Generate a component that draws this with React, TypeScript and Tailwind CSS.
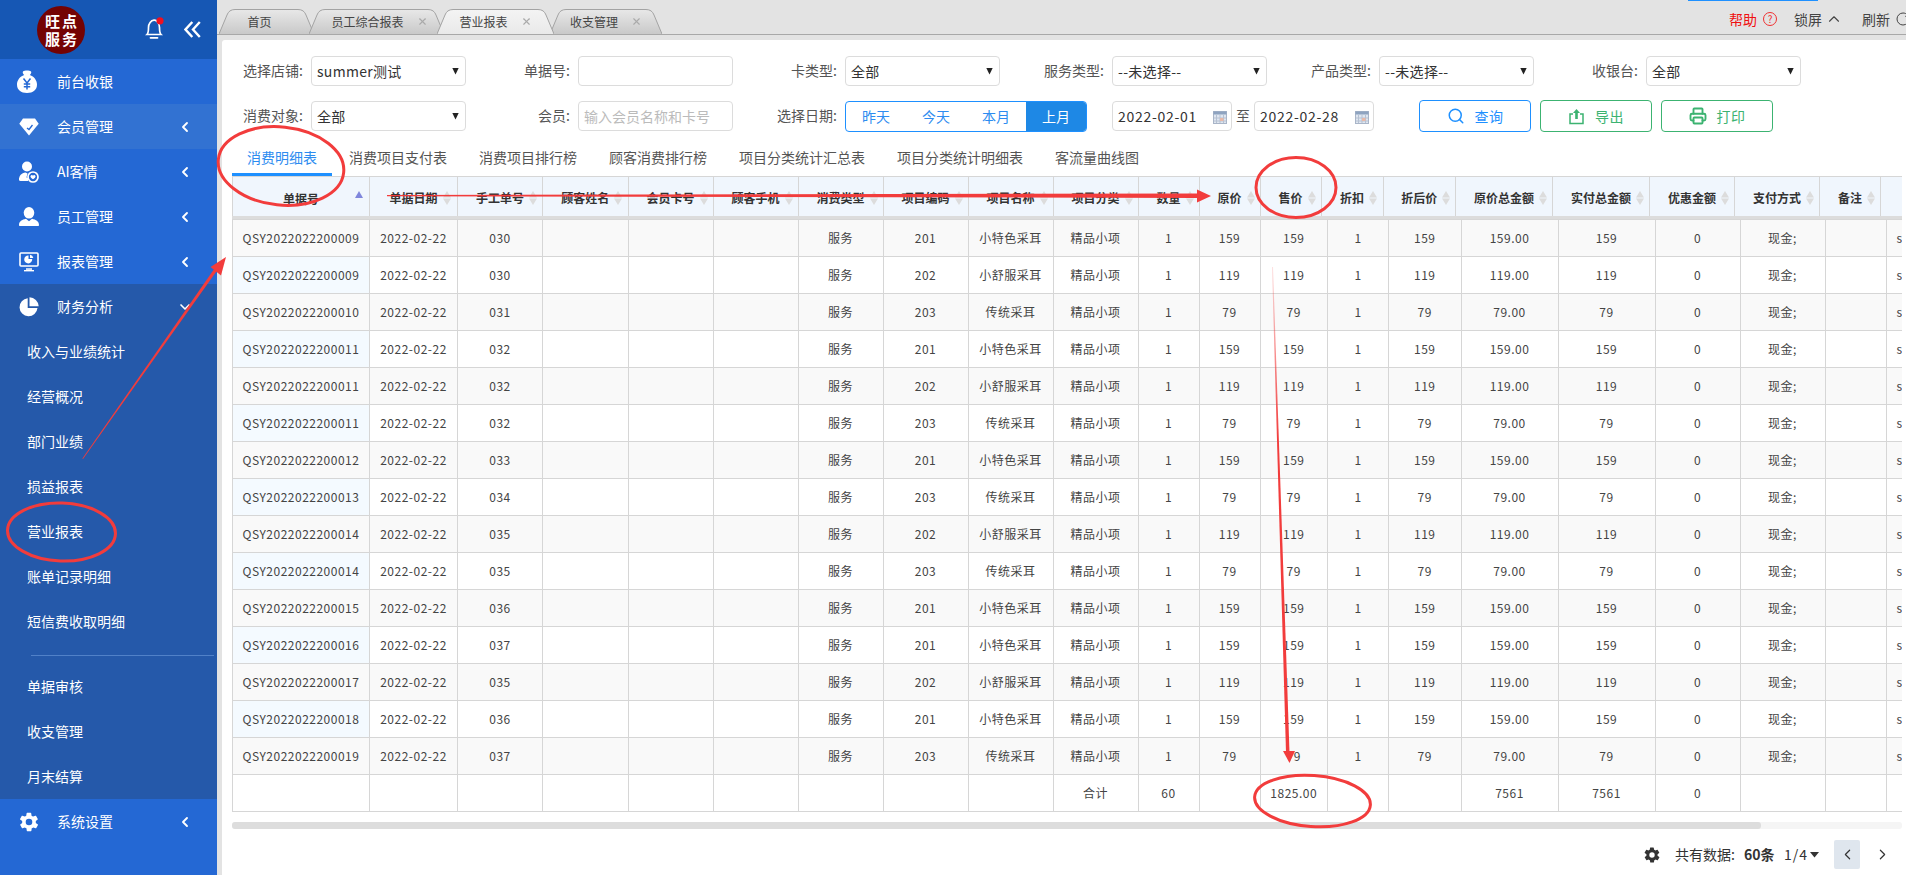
import React from "react";
import { ChevronLeft, ChevronDown, ChevronUp, ChevronRight, Search, Printer, RotateCw, X } from "lucide-react";

const GEAR =
  "M19.4 13a7.6 7.6 0 0 0 0-2l2.1-1.6a.5.5 0 0 0 .1-.6l-2-3.5a.5.5 0 0 0-.6-.2l-2.5 1a7.5 7.5 0 0 0-1.7-1l-.4-2.6a.5.5 0 0 0-.5-.5h-4a.5.5 0 0 0-.5.4l-.4 2.7a7.5 7.5 0 0 0-1.7 1l-2.5-1a.5.5 0 0 0-.6.2l-2 3.5a.5.5 0 0 0 .1.6L4.6 11a7.6 7.6 0 0 0 0 2l-2.1 1.6a.5.5 0 0 0-.1.6l2 3.5a.5.5 0 0 0 .6.2l2.5-1a7.5 7.5 0 0 0 1.7 1l.4 2.6a.5.5 0 0 0 .5.5h4a.5.5 0 0 0 .5-.4l.4-2.7a7.5 7.5 0 0 0 1.7-1l2.5 1a.5.5 0 0 0 .6-.2l2-3.5a.5.5 0 0 0-.1-.6zM12 15.6a3.6 3.6 0 1 1 0-7.2 3.6 3.6 0 0 1 0 7.2z";

function BagIcon() {
  return (
    <svg width="22" height="24" viewBox="0 0 22 24">
      <path d="M7 1.5c1.5-1.2 6.500-1.200 8 0 .8.700-.2 2.800-1.200 3.500 4.400 1.500 7.200 5.500 7.200 9.500 0 5.500-4 8.500-10 8.500S1 20 1 14.500c0-4 2.800-8 7.200-9.500C7.200 4.300 6.200 2.200 7 1.500z" fill="#fff" />
      <path d="M7.500 8.500 11 13l3.500-4.500M11 13v6.500M7.800 14h6.400M7.800 16.800h6.400" stroke="#2468d4" strokeWidth="1.500" fill="none" />
    </svg>
  );
}
function DiamondIcon() {
  return (
    <svg width="20" height="18" viewBox="0 0 20 18">
      <path d="M4 .5h12l3.700 5.300L10 17.500.3 5.800z" fill="#fff" />
      <path d="m8 10 2 1.500 3.500-4.500" stroke="#2468d4" strokeWidth="1.300" fill="none" />
    </svg>
  );
}
function UserBadgeIcon() {
  return (
    <svg width="20" height="22" viewBox="0 0 20 22">
      <circle cx="8" cy="5.500" r="5" fill="#fff" />
      <path d="M0 19c0-4.500 2.500-7 6.500-7.500l2 1A7 7 0 0 0 8.500 19z" fill="#fff" />
      <path d="M0 17h9v3H1.500A1.500 1.500 0 0 1 0 18.500z" fill="#fff" />
      <circle cx="14" cy="16" r="5" fill="#2468d4" stroke="#fff" strokeWidth="1.700" />
      <path d="M11.500 15c.8-1.300 2-1 2.500-.2.500-.8 1.700-1.100 2.500.2.400 1-1 2.400-2.500 3.300-1.500-.9-2.900-2.300-2.500-3.300z" fill="#fff" />
    </svg>
  );
}
function UserIcon() {
  return (
    <svg width="20" height="19" viewBox="0 0 20 19">
      <ellipse cx="10" cy="5.800" rx="5.300" ry="5.800" fill="#fff" />
      <path d="M0 18c0-3.800 3-5.300 7-6.300l3 2.500 3-2.500c4 1 7 2.500 7 6.300 0 .6-.4 1-1 1H1c-.6 0-1-.4-1-1z" fill="#fff" />
    </svg>
  );
}
function MonitorIcon() {
  return (
    <svg width="20" height="20" viewBox="0 0 20 20">
      <rect x="1" y="1" width="18" height="13" rx="1" fill="none" stroke="#fff" strokeWidth="1.600" />
      <rect x="7" y="16.300" width="6" height="1.500" fill="#fff" />
      <rect x="5" y="18" width="10" height="1.400" fill="#fff" />
      <path d="M9.500 3.500v3.600h3.700a4 4 0 1 1-3.700-3.600z" fill="#fff" />
      <path d="M11 2.700a4 4 0 0 1 3.300 3.400H11z" fill="#fff" />
    </svg>
  );
}
function PieIcon() {
  return (
    <svg width="20" height="20" viewBox="0 0 20 20">
      <path d="M8.700 1.200V11h9.800A9 9 0 1 1 8.700 1.200z" fill="#fff" />
      <path d="M10.500.3a9.500 9.500 0 0 1 9.200 8.900h-9.200z" fill="#fff" />
    </svg>
  );
}
function GearIcon({ size = 20, color = "#fff" }: { size?: number; color?: string }) {
  return (
    <svg width={size} height={size} viewBox="0 0 24 24">
      <path d={GEAR} fill={color} fillRule="evenodd" />
    </svg>
  );
}

function Bell() {
  return (
    <svg width="20" height="24" viewBox="0 0 20 24" fill="none">
      <path d="M2 17.500c1.500-1.500 1.500-4 1.500-7C3.500 6.500 6 3.500 9 3.200c3-.3 5.500 3.300 5.500 7.300 0 3 0 5.500 1.500 7z" stroke="#fff" strokeWidth="1.700" />
      <path d="M5.500 20.800h7" stroke="#fff" strokeWidth="1.800" strokeLinecap="round" />
      <circle cx="15" cy="3.800" r="3.600" fill="#f01020" />
    </svg>
  );
}

function DoubleLeft() {
  return (
    <svg width="17" height="17" viewBox="0 0 17 17" fill="none" stroke="#fff" strokeWidth="2.400">
      <path d="M8.300 1 1.500 8.500l6.800 7.500M15.800 1 9 8.500l6.800 7.500" />
    </svg>
  );
}

function MenuRow({ icon, label, active, open }: { icon: React.ReactNode; label: string; active?: boolean; open?: boolean }) {
  return (
    <div className={`flex items-center text-white text-[14px] h-[45px] ${active ? "bg-[#3272d2]" : ""}`}>
      <div className="w-[54px] pl-[3px] flex justify-center">{icon}</div>
      <span className="w-[123px] pl-[3px]">{label}</span>
      {open ? <ChevronDown size={16} strokeWidth={2.500} /> : <ChevronLeft size={16} strokeWidth={2.800} />}
    </div>
  );
}

function Sidebar() {
  const sub1 = ["收入与业绩统计", "经营概况", "部门业绩", "损益报表", "营业报表", "账单记录明细", "短信费收取明细"];
  const sub2 = ["单据审核", "收支管理", "月末结算"];
  return (
    <div className="w-[217px] shrink-0 bg-[#2468d4] flex flex-col">
      <div className="h-[59px] bg-[#1657b4] flex items-center">
        <div className="ml-[37px] w-[48px] h-[48px] rounded-full bg-[#740303] text-white font-bold text-[15px] leading-[18px] flex flex-col items-center justify-center tracking-[2px]">
          <span className="pl-[2px]">旺点</span>
          <span className="pl-[2px]">服务</span>
        </div>
        <div className="ml-[60px] mt-[-1px]"><Bell /></div>
        <div className="ml-[19px]"><DoubleLeft /></div>
      </div>
      <div className="h-[45px] flex items-center text-white text-[14px]">
        <div className="w-[54px] flex justify-center"><BagIcon /></div>
        <span className="pl-[3px]">前台收银</span>
      </div>
      <MenuRow icon={<DiamondIcon />} label="会员管理" active />
      <MenuRow icon={<UserBadgeIcon />} label="AI客情" />
      <MenuRow icon={<UserIcon />} label="员工管理" />
      <MenuRow icon={<MonitorIcon />} label="报表管理" />
      <div className="bg-[#2559aa]">
        <MenuRow icon={<PieIcon />} label="财务分析" open />
        {sub1.map((s) => (
          <div key={s} className="h-[45px] flex items-center pl-[27px] text-white text-[14px]">{s}</div>
        ))}
        <div className="h-px bg-[#5181c8] ml-[31px] mr-[3px] mt-[11px] mb-[8px]" />
        {sub2.map((s) => (
          <div key={s} className="h-[45px] flex items-center pl-[27px] text-white text-[14px]">{s}</div>
        ))}
      </div>
      <MenuRow icon={<GearIcon size={22} />} label="系统设置" />
    </div>
  );
}

function PageTab({ label, width, active, close, cls }: { label: string; width: number; active?: boolean; close?: boolean; cls: string }) {
  const w = width;
  const d = `M0 25L8 6Q10 .5 16 .5L${w - 16} .5Q${w - 10} .5 ${w - 8} 6L${w} 25`;
  return (
    <div className={`relative h-[25px] flex items-center justify-center text-[12px] text-[#444] shrink-0 ${cls}`} style={{ width: w }}>
      <svg className="absolute inset-0" width={w} height={26}>
        <defs>
          <linearGradient id="tg" x1="0" y1="0" x2="0" y2="1">
            <stop offset="0" stopColor="#e8e8e8" />
            <stop offset="1" stopColor="#c9c9c9" />
          </linearGradient>
          <linearGradient id="ta" x1="0" y1="0" x2="0" y2="1">
            <stop offset="0" stopColor="#f4f4f4" />
            <stop offset="1" stopColor="#e9e9e9" />
          </linearGradient>
        </defs>
        <path d={d} fill={active ? "url(#ta)" : "url(#tg)"} stroke="#a3a3a3" strokeWidth="1" />
      </svg>
      <span className="relative">{label}</span>
      {close && <X className="relative ml-[13px] text-[#aaa]" size={11} strokeWidth={2.500} />}
    </div>
  );
}

function TopBar() {
  return (
    <div className="relative h-[40px] bg-[#e3e3e3] shrink-0">
      <div className="absolute left-[1471px] top-0 h-px w-[130px] bg-[#1e90ff]" />
      <div className="absolute left-0 right-0 top-[34px] h-px bg-[#a8a8a8]" />
      <div className="flex pt-[9px] pl-[2px]">
        <PageTab label="首页" width={95} cls="pr-[14px]" />
        <PageTab label="员工综合报表" width={135} close cls="-ml-[5px] pl-[6px]" />
        <PageTab label="营业报表" width={117} active close cls="-ml-[7px] z-10" />
        <PageTab label="收支管理" width={112} close cls="-ml-[4px]" />
        <div className="flex-1 flex items-center justify-end text-[14px] text-[#444] h-[20px] mt-[0px] overflow-hidden">
          <span className="text-[#f01010]">帮助</span>
          <span className="ml-[6px] w-[14px] h-[14px] rounded-full border border-[#f03030] text-[#f03030] text-[10px] leading-[12px] text-center">?</span>
          <span className="ml-[17px]">锁屏</span>
          <ChevronUp className="ml-[3px] text-[#444]" size={18} strokeWidth={1.500} />
          <span className="ml-[19px]">刷新</span>
          <RotateCw className="ml-[5px] mr-[-5px] text-[#444] shrink-0" size={16} strokeWidth={1.500} />
        </div>
      </div>
    </div>
  );
}

function Sel({ value, w = 155 }: { value: string; w?: number }) {
  return (
    <div className="relative h-[30px] border border-[#dcdcdc] rounded-[4px] bg-white flex items-center pl-[5px] text-[14px] tracking-[0.300px] text-[#333] shrink-0" style={{ width: w }}>
      <span className="mt-[1px]">{value}</span>
      <svg className="absolute right-[6px] top-[11px]" width="7" height="7" viewBox="0 0 7 7"><path d="M.3 0h6.400L3.500 6.500z" fill="#222" /></svg>
    </div>
  );
}
function Label({ children, w }: { children: React.ReactNode; w: number }) {
  return <div className="text-[14px] text-[#555] text-right pr-[8px] shrink-0 mt-[-2px]" style={{ width: w }}>{children}</div>;
}
function Input({ ph }: { ph?: string }) {
  return (
    <div className="h-[30px] w-[155px] border border-[#dcdcdc] rounded-[4px] pl-[5px] flex items-center text-[14px] text-[#bbb] shrink-0">
      {ph}
    </div>
  );
}
function CalIcon() {
  return (
    <svg className="absolute right-[4px] top-[9px]" width="14" height="13" viewBox="0 0 14 13">
      <rect x="0.500" y="0.500" width="13" height="12" fill="#dfe6f0" stroke="#a9b5c8" />
      <rect x="0.500" y="0.500" width="13" height="3" fill="#8ea3c0" />
      <path d="M3.500 4v8M7 4v8M10.500 4v8M1 7h12M1 10h12" stroke="#b6c1d2" strokeWidth="1" />
      <rect x="7" y="7" width="3.500" height="3" fill="#e8b9a8" />
    </svg>
  );
}
function DateBox({ v, w }: { v: string; w: number }) {
  return (
    <div className="relative h-[30px] border border-[#dcdcdc] rounded-[4px] flex items-center pl-[5px] text-[14px] tracking-[0.700px] text-[#333] shrink-0" style={{ width: w }}>
      {v}
      <CalIcon />
    </div>
  );
}
function ExportIcon() {
  return (
    <svg width="17" height="17" viewBox="0 0 17 17" fill="none">
      <path d="M5 6H2v9.500h13V6h-3" stroke="#3cb371" strokeWidth="1.500" />
      <path d="M8.500 1 5 5h2.200v6h2.600V5H12z" fill="#3cb371" />
    </svg>
  );
}
function Btn({ icon, label, blue, ml }: { icon: React.ReactNode; label: string; blue?: boolean; ml: string }) {
  return (
    <div className={`w-[112px] h-[32px] rounded-[4px] border flex items-center justify-center text-[14px] gap-[10px] shrink-0 tracking-[0.500px] ${ml} ${blue ? "border-[#1e90ff] text-[#1e90ff]" : "border-[#3cb371] text-[#3cb371]"}`}>
      {icon}
      <span>{label}</span>
    </div>
  );
}

function Filters() {
  return (
    <div className="pt-[16px]">
      <div className="flex items-center">
        <Label w={89}>选择店铺:</Label>
        <Sel value="summer测试" />
        <Label w={112}>单据号:</Label>
        <Input />
        <Label w={112}>卡类型:</Label>
        <Sel value="全部" />
        <Label w={112}>服务类型:</Label>
        <Sel value="--未选择--" />
        <Label w={112}>产品类型:</Label>
        <Sel value="--未选择--" />
        <Label w={112}>收银台:</Label>
        <Sel value="全部" />
      </div>
      <div className="flex items-center mt-[15px] h-[30px]">
        <Label w={89}>消费对象:</Label>
        <Sel value="全部" />
        <Label w={112}>会员:</Label>
        <Input ph="输入会员名称和卡号" />
        <Label w={112}>选择日期:</Label>
        <div className="w-[242px] h-[31px] border border-[#1e90ff] rounded-[4px] flex text-[14px] text-[#2d8cf0] overflow-hidden shrink-0">
          <div className="flex-1 flex items-center justify-center">昨天</div>
          <div className="flex-1 flex items-center justify-center">今天</div>
          <div className="flex-1 flex items-center justify-center">本月</div>
          <div className="flex-1 flex items-center justify-center bg-[#1e88e5] text-white">上月</div>
        </div>
        <div className="w-[25px] shrink-0" />
        <DateBox v="2022-02-01" w={120} />
        <div className="w-[22px] text-center text-[14px] text-[#555] shrink-0 mt-[-2px]">至</div>
        <DateBox v="2022-02-28" w={120} />
        <Btn ml="ml-[45px]" blue icon={<Search size={18} strokeWidth={2} />} label="查询" />
        <Btn ml="ml-[9px]" icon={<ExportIcon />} label="导出" />
        <Btn ml="ml-[9px]" icon={<Printer size={18} strokeWidth={2.500} />} label="打印" />
      </div>
    </div>
  );
}

function DataTabs() {
  const rest = ["消费项目支付表", "消费项目排行榜", "顾客消费排行榜", "项目分类统计汇总表", "项目分类统计明细表", "客流量曲线图"];
  return (
    <div className="flex mt-[10px] ml-[10px] h-[35px] text-[14px] text-[#555]">
      <div className="w-[100px] h-[35px] flex items-center justify-center text-[#2d8cf0] border-b-[3px] border-[#1e90ff]">消费明细表</div>
      <div className="w-px" />
      {rest.map((t) => (
        <div key={t} className="px-[16px] flex items-center h-[32px]">{t}</div>
      ))}
    </div>
  );
}

const headW = [137, 88, 85, 85.5, 85, 85, 85, 85, 85, 85, 61, 61, 61, 62, 72.5, 97, 97, 85, 85, 61, 60];
const bodyW = [137, 88, 85, 85.5, 85, 85, 85, 85, 85, 85, 61, 61, 67.5, 61, 72.5, 97, 97, 85, 85, 61, 60];
const heads = ["单据号", "单据日期", "手工单号", "顾客姓名", "会员卡号", "顾客手机", "消费类型", "项目编码", "项目名称", "项目分类", "数量", "原价", "售价", "折扣", "折后价", "原价总金额", "实付总金额", "优惠金额", "支付方式", "备注", ""];

const seed: [string, string, number][] = [
  ["0009", "030", 201], ["0009", "030", 202], ["0010", "031", 203], ["0011", "032", 201], ["0011", "032", 202],
  ["0011", "032", 203], ["0012", "033", 201], ["0013", "034", 203], ["0014", "035", 202], ["0014", "035", 203],
  ["0015", "036", 201], ["0016", "037", 201], ["0017", "035", 202], ["0018", "036", 201], ["0019", "037", 203],
];
const items: Record<number, [string, string]> = { 201: ["小特色采耳", "159"], 202: ["小舒服采耳", "119"], 203: ["传统采耳", "79"] };

function SortIcon({ active }: { active?: boolean }) {
  return active ? (
    <svg className="absolute right-[6px] top-[14px]" width="8" height="7" viewBox="0 0 8 7"><path d="M4 0l4 7H0z" fill="#7f86dc" /></svg>
  ) : (
    <svg className="absolute left-full ml-[5px] top-[1px]" width="8" height="14" viewBox="0 0 8 14">
      <path d="M4 0l4 6.500H0zM4 14l4-6.500H0z" fill="#dcdcdc" />
    </svg>
  );
}

function HeadTable() {
  return (
    <table className="table-fixed border-collapse" style={{ width: headW.reduce((a, b) => a + b, 0) }}>
      <colgroup>{headW.map((w, i) => <col key={i} style={{ width: w }} />)}</colgroup>
      <thead>
        <tr className="h-[41px] bg-[#f0f6fd]">
          {heads.map((h, i) => (
            <th key={i} className="relative border border-[#d6d6d6] border-b-[3px] border-b-[#dcdcdc] text-[12px] font-bold text-[#333] p-0">
              {i === 0 ? (
                <>
                  <span className="relative top-[2px]">{h}</span>
                  <SortIcon active />
                </>
              ) : h ? (
                <span className="relative top-[1px] inline-block leading-[16px]">
                  {h}
                  <SortIcon />
                </span>
              ) : null}
            </th>
          ))}
        </tr>
      </thead>
    </table>
  );
}

function Cell({ children, cls = "" }: { children?: React.ReactNode; cls?: string }) {
  return <td className={`border border-[#d6d6d6] h-[37px] p-0 text-center text-[12px] tracking-[0.500px] text-[#444] whitespace-nowrap overflow-hidden ${cls}`}>{children}</td>;
}

function BodyTable() {
  return (
    <table className="table-fixed border-collapse" style={{ width: bodyW.reduce((a, b) => a + b, 0) }}>
      <colgroup>{bodyW.map((w, i) => <col key={i} style={{ width: w }} />)}</colgroup>
      <tbody>
        {seed.map(([no, hand, code], r) => {
          const [name, price] = items[code];
          const odd = r % 2 === 0;
          return (
            <tr key={r} className={odd ? "bg-[#f9f9f9]" : "bg-white"}>
              <Cell cls={odd ? "" : "bg-[#f4faff]"}>{`QSY202202220${no}`}</Cell>
              <Cell>2022-02-22</Cell>
              <Cell>{hand}</Cell>
              <Cell /><Cell /><Cell />
              <Cell>服务</Cell>
              <Cell>{code}</Cell>
              <Cell>{name}</Cell>
              <Cell>精品小项</Cell>
              <Cell>1</Cell>
              <Cell>{price}</Cell>
              <Cell>{price}</Cell>
              <Cell>1</Cell>
              <Cell>{price}</Cell>
              <Cell>{price}.00</Cell>
              <Cell>{price}</Cell>
              <Cell>0</Cell>
              <Cell>现金;</Cell>
              <Cell />
              <Cell cls="text-left! pl-[10px]">s</Cell>
            </tr>
          );
        })}
        <tr className="bg-white">
          <Cell /><Cell /><Cell /><Cell /><Cell /><Cell /><Cell /><Cell /><Cell />
          <Cell>合计</Cell>
          <Cell>60</Cell>
          <Cell />
          <Cell>1825.00</Cell>
          <Cell /><Cell />
          <Cell>7561</Cell>
          <Cell>7561</Cell>
          <Cell>0</Cell>
          <Cell /><Cell /><Cell />
        </tr>
      </tbody>
    </table>
  );
}

function Footer() {
  return (
    <div className="flex items-center h-[29px] mt-[11px] text-[14px] text-[#333]">
      <div className="ml-[1421px] mr-[13px]"><GearIcon size={18} color="#333" /></div>
      <span className="w-[69px] ml-[1px]">共有数据:</span>
      <span className="font-bold w-[40px]">60条</span>
      <span className="tracking-[1px]">1/4</span>
      <svg className="ml-[2px]" width="9" height="6" viewBox="0 0 9 6"><path d="M0 0h9L4.500 5.500z" fill="#333" /></svg>
      <div className="ml-[15px] w-[26px] h-[29px] bg-[#dfe6ee] rounded-[2px] flex items-center justify-center"><ChevronLeft size={17} strokeWidth={1.700} /></div>
      <ChevronRight className="ml-[14px]" size={17} strokeWidth={1.700} />
    </div>
  );
}

function Annotations() {
  const red = "#f23c3c";
  return (
    <svg className="absolute inset-0 pointer-events-none z-20" width="1906" height="875" viewBox="0 0 1906 875" fill="none">
      <defs>
        <linearGradient id="fade" gradientUnits="userSpaceOnUse" x1="0" y1="267" x2="0" y2="440">
          <stop offset="0" stopColor={red} stopOpacity="0.15" />
          <stop offset="1" stopColor={red} stopOpacity="1" />
        </linearGradient>
      </defs>
      <ellipse cx="281" cy="166" rx="63" ry="39" stroke={red} strokeWidth="3" transform="rotate(6 281 166)" />
      <ellipse cx="1296" cy="187.500" rx="40" ry="30" stroke={red} strokeWidth="3" />
      <ellipse cx="61.500" cy="532" rx="54" ry="29" stroke={red} strokeWidth="3" transform="rotate(2 61.500 532)" />
      <ellipse cx="1312.500" cy="801" rx="58" ry="25.500" stroke={red} strokeWidth="3" transform="rotate(4 1312.500 801)" />
      <path d="M83 459l-.6-.5L218 263.500l2.600 2z" fill={red} />
      <path d="M226 257l-15.500 10 10.500 8.500z" fill={red} />
      <path d="M387 195L1198 193.500v4.500L387 196.200z" fill={red} />
      <path d="M1211 196l-14-6.500v13z" fill={red} />
      <path d="M1272 267l1 0 16.500 485.500h-3.500z" fill="url(#fade)" />
      <path d="M1289.500 763l-6.500-12h12z" fill={red} />
    </svg>
  );
}

export default function App() {
  return (
    <div className="relative w-[1906px] h-[875px] overflow-hidden flex bg-[#e3e3e3] font-['Noto_Sans_CJK_SC','Noto_Sans',sans-serif]">
      <Sidebar />
      <div className="flex-1 min-w-0 flex flex-col">
        <TopBar />
        <div className="flex-1 ml-[5px] bg-white rounded-tl-[3px] min-w-0">
          <Filters />
          <DataTabs />
          <div className="ml-[10px] w-[1670px] overflow-hidden">
            <div className="overflow-hidden"><HeadTable /></div>
            <div className="overflow-hidden"><BodyTable /></div>
            <div className="h-[7px] mt-[10px] bg-[#f5f5f5] rounded-[3px]">
              <div className="h-[7px] w-[1529px] bg-[#dddddd] rounded-[3px]" />
            </div>
          </div>
          <Footer />
        </div>
      </div>
      <Annotations />
    </div>
  );
}
